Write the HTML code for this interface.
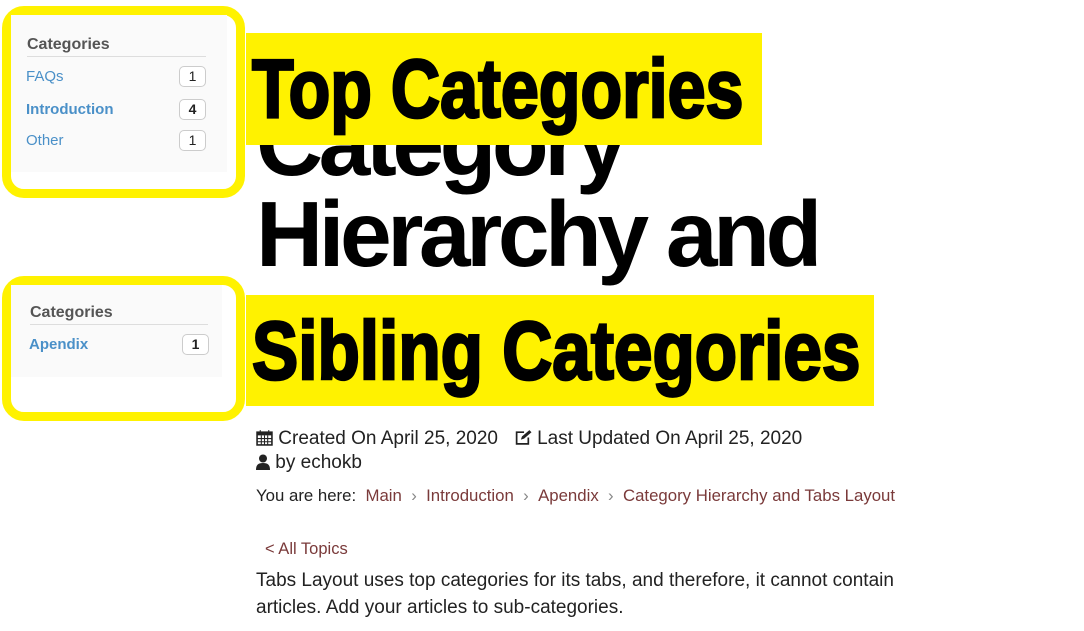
<!DOCTYPE html>
<html><head><meta charset="utf-8"><style>
*{margin:0;padding:0;box-sizing:border-box}
body{width:1084px;height:631px;overflow:hidden;background:#fff;font-family:"Liberation Sans",sans-serif;position:relative}
.ab{position:absolute}
.ybox{position:absolute;border:9px solid #fff200;border-radius:22px}
.panel{position:absolute;background:#fafafa}
.ct{font-size:16px;font-weight:bold;color:#555;border-bottom:1px solid #ddd;padding-bottom:2px}
.row{position:absolute;font-size:15px;color:#4a90c8}
.cnt{position:absolute;width:27px;height:21px;border:1px solid #ccc;border-radius:5px;background:#fff;font-size:14px;text-align:center;line-height:19px;color:#222}
.h{position:absolute;left:256px;font-size:93px;font-weight:bold;letter-spacing:-4.5px;color:#000;white-space:nowrap}
.ban{position:absolute;background:#fff200}
.bt{position:absolute;font-size:90px;font-weight:bold;color:#000;-webkit-text-stroke:3px #000;transform-origin:0 0;white-space:nowrap;line-height:1}
.m{position:absolute;left:256px;font-size:19px;color:#222;white-space:nowrap}
.r{color:#7a3a3a}
</style></head><body>
<div class="h" style="top:90px">Category</div>
<div class="h" style="top:181px">Hierarchy and</div>

<div class="ybox" style="left:2px;top:6px;width:243px;height:192px"></div>
<div class="panel" style="left:11px;top:15px;width:216px;height:157px"></div>
<div class="ab ct" style="left:27px;top:36px;width:179px">Categories</div>
<div class="row" style="left:26px;top:68px">FAQs</div>
<div class="row" style="left:26px;top:101px;font-weight:bold">Introduction</div>
<div class="row" style="left:26px;top:132px">Other</div>
<div class="cnt" style="left:179px;top:66px">1</div>
<div class="cnt" style="left:179px;top:99px;font-weight:bold">4</div>
<div class="cnt" style="left:179px;top:130px">1</div>

<div class="ybox" style="left:2px;top:276px;width:243px;height:145px"></div>
<div class="panel" style="left:11px;top:285px;width:211px;height:92px"></div>
<div class="ab ct" style="left:30px;top:304px;width:178px">Categories</div>
<div class="row" style="left:29px;top:336px;font-weight:bold">Apendix</div>
<div class="cnt" style="left:182px;top:334px;font-weight:bold">1</div>

<div class="ban" style="left:246px;top:33px;width:516px;height:112px"></div>
<div class="bt" style="left:252px;top:48px;transform:scale(0.758,0.92)">Top Categories</div>
<div class="ban" style="left:246px;top:295px;width:628px;height:111px"></div>
<div class="bt" style="left:252px;top:310px;transform:scale(0.77,0.92)">Sibling Categories</div>

<div class="m" style="top:428px">
<svg width="17" height="17" viewBox="0 0 16 16" style="vertical-align:-2px"><rect x="1" y="3" width="14" height="12" fill="none" stroke="#222" stroke-width="1.5"/><rect x="1" y="3" width="14" height="3" fill="#222"/><path d="M4 1v4M12 1v4M1 9h14M1 12h14M5 6v9M8 6v9M11 6v9" stroke="#222" stroke-width="1"/></svg> Created On April 25, 2020 &nbsp;
<svg width="18" height="17" viewBox="0 0 16 16" style="vertical-align:-2px"><path d="M9 3H2v11h11V8" fill="none" stroke="#222" stroke-width="1.6"/><path d="M6 10l1-3 7-6 2 2-7 6z" fill="#222"/></svg> Last Updated On April 25, 2020</div>
<div class="m" style="top:452px"><svg width="14" height="16" viewBox="0 0 14 16" style="vertical-align:-2px"><circle cx="7" cy="4.5" r="4" fill="#222"/><path d="M0 16c0-5 2-7 7-7s7 2 7 7z" fill="#222"/></svg> by echokb</div>
<div class="m" style="top:486px;font-size:16.8px">You are here: &nbsp;<span class="r">Main</span> &nbsp;<span style="color:#888">›</span> &nbsp;<span class="r">Introduction</span> &nbsp;<span style="color:#888">›</span> &nbsp;<span class="r">Apendix</span> &nbsp;<span style="color:#888">›</span> &nbsp;<span class="r">Category Hierarchy and Tabs Layout</span></div>
<div class="m r" style="top:540px;left:265px;font-size:16.5px">&lt; All Topics</div>
<div class="m" style="top:567px;line-height:27px;font-size:19px">Tabs Layout uses top categories for its tabs, and therefore, it cannot contain<br>articles. Add your articles to sub-categories.</div>
</body></html>
